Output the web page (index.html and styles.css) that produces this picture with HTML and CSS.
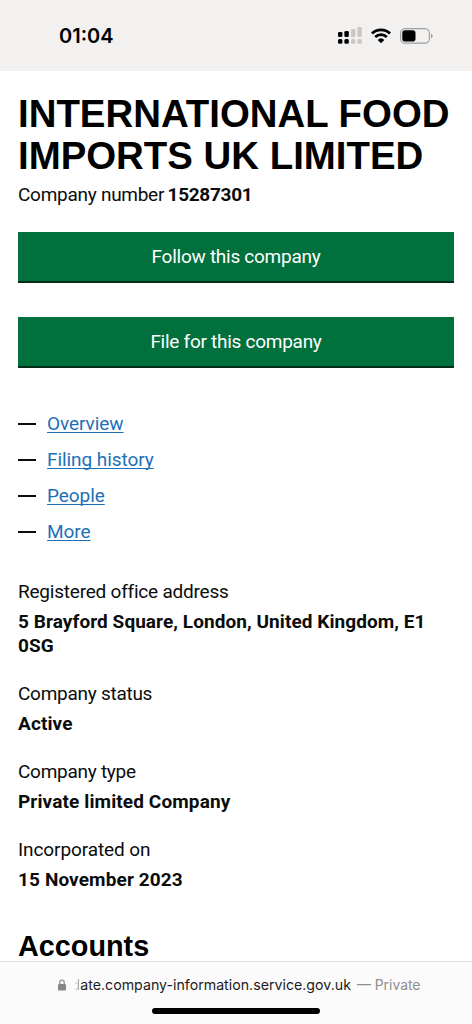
FILE: index.html
```
<!DOCTYPE html>
<html lang="en">
<head>
<meta charset="utf-8">
<title>Company overview</title>
<link rel="stylesheet" href="styles.css">
</head>
<body>
<div class="screen">
  <header class="status-bar">
    <time class="clock">01:04</time>
    <div class="status-icons">
      <svg class="signal" width="24" height="18" viewBox="0 0 24 18">
        <g fill="#000"><rect x="0" y="5" width="4.4" height="5" rx="1.2"/><rect x="6.4" y="4" width="4.4" height="6" rx="1.2"/><rect x="0" y="12" width="4.4" height="4.8" rx="1.5"/><rect x="6.4" y="12" width="4.4" height="4.8" rx="1.5"/></g>
        <g fill="#c9c8c7"><rect x="13" y="2" width="4.4" height="8" rx="1.2"/><rect x="19.4" y="0" width="4.4" height="10" rx="1.2"/><rect x="13" y="12" width="4.4" height="4.8" rx="1.5"/><rect x="19.4" y="12" width="4.4" height="4.8" rx="1.5"/></g>
      </svg>
      <svg class="wifi" width="20" height="16" viewBox="0 0 20 16">
        <g fill="none" stroke="#000" stroke-width="2.8"><path d="M1 5.4a13 13 0 0 1 18 0"/><path d="M4.2 9a8.5 8.5 0 0 1 11.6 0"/></g>
        <path d="M6.7 11.9a4.8 4.8 0 0 1 6.6 0L10 15.3z"/>
      </svg>
      <svg class="battery" width="33" height="16" viewBox="0 0 33 16">
        <rect x=".6" y=".6" width="28.8" height="14.6" rx="4.6" fill="none" stroke="#a09f9e" stroke-width="1.2"/>
        <rect x="2.3" y="2.3" width="13.2" height="11.2" rx="2.8"/>
        <path d="M31 5.5c2.2.8 2.2 4 0 4.8z" fill="#a09f9e"/>
      </svg>
    </div>
  </header>
  <main class="page">
    <h1 class="company-name">INTERNATIONAL FOOD<br>IMPORTS UK LIMITED</h1>
    <p class="company-number">Company number <strong>15287301</strong></p>
    <div class="actions">
      <a class="button">Follow this company</a>
      <a class="button">File for this company</a>
    </div>
    <ul class="tabs">
      <li><a href="#overview">Overview</a></li>
      <li><a href="#filing">Filing history</a></li>
      <li><a href="#people">People</a></li>
      <li><a href="#more">More</a></li>
    </ul>
    <dl class="details">
      <dt class="wide">Registered office address</dt>
      <dd class="long">5 Brayford Square, London, United Kingdom, E1<br>0SG</dd>
      <dt>Company status</dt>
      <dd>Active</dd>
      <dt>Company type</dt>
      <dd>Private limited Company</dd>
      <dt class="loose">Incorporated on</dt>
      <dd>15 November 2023</dd>
    </dl>
    <h2 class="section-title">Accounts</h2>
  </main>
  <footer class="address-bar">
    <div class="address">
      <svg class="lock" width="8" height="12" viewBox="0 0 8 12"><rect x="0" y="5" width="8" height="6.5" rx="1.2" fill="#858585"/><path d="M1.8 5.5V3.2a2.2 2.2 0 0 1 4.4 0v2.3" fill="none" stroke="#858585" stroke-width="1.2"/></svg>
      <span class="domain"><span class="fade">d</span>ate.company-information.service.gov.uk</span>
      <span class="mode">— Private</span>
    </div>
    <div class="home-indicator"></div>
  </footer>
</div>
</body>
</html>
```
FILE: styles.css
```
* { box-sizing: border-box; }
body { margin: 0; background: #fff; color: #0b0c0c; font-family: Roboto, sans-serif; }
.screen { width: 472px; height: 1024px; display: flex; flex-direction: column; overflow: hidden; }
.status-bar { height: 71px; flex: none; background: #f2f1f0; display: flex; justify-content: space-between; align-items: center; padding: 0 39px 0 59px; }
.clock { font: 600 20px/24px Inter, sans-serif; color: #000; }
.status-icons { display: flex; align-items: center; gap: 9px; }
.page { flex: 1; min-height: 0; padding: 22px 18px 0; font-size: 19px; line-height: 24px; letter-spacing: -0.27px; }
.company-name { margin: 0; font: bold 38.4px/42px "Liberation Sans", sans-serif; letter-spacing: 0; color: #000; white-space: nowrap; }
.company-number { margin: 6px 0 0; }
.company-number strong { letter-spacing: -0.3px; margin-left: -1px; }
.actions { display: flex; flex-direction: column; gap: 34px; margin-top: 25px; }
.button { height: 51px; padding-top: 1px; background: #00703c; border-bottom: 2px solid #002d18; color: #fff; display: flex; align-items: center; justify-content: center; }
.tabs { list-style: none; margin: 44px 0 0; padding: 0; display: flex; flex-direction: column; gap: 12px; letter-spacing: -0.06px; }
.tabs li { display: flex; align-items: center; gap: 11px; }
.tabs li::before { content: ""; width: 18px; height: 1.5px; background: #0b0c0c; }
.tabs a { color: #1d70b8; text-underline-offset: 2px; text-decoration-thickness: 1px; text-decoration-skip-ink: none; }
.details { margin: 36px 0 0; }
.details dt { margin-bottom: 6px; }
.details .wide { letter-spacing: -0.22px; }
.details .loose { letter-spacing: -0.1px; }
.details dd { margin: 0 0 24px; font-weight: 700; white-space: nowrap; letter-spacing: 0.12px; }
.details .long { letter-spacing: 0.07px; }
.section-title { margin: 36px 0 0; font: bold 28.8px/34px "Liberation Sans", sans-serif; letter-spacing: 0; color: #000; padding-top: 1px; }
.address-bar { height: 63px; flex: none; background: #fbfbfb; border-top: 1px solid #dedede; display: flex; flex-direction: column; align-items: center; padding-top: 14px; }
.address { display: flex; align-items: center; gap: 6px; margin-left: 6px; font: 14.2px/18px Inter, sans-serif; color: #1c1c1c; white-space: nowrap; }
.fade { color: transparent; background: linear-gradient(90deg, transparent 20%, #999 100%); background-clip: text; -webkit-background-clip: text; }
.mode { color: #8e8e8e; font-size: 13.9px; }
.home-indicator { width: 168px; height: 6px; border-radius: 3px; background: #000; margin-top: 14px; }
```
